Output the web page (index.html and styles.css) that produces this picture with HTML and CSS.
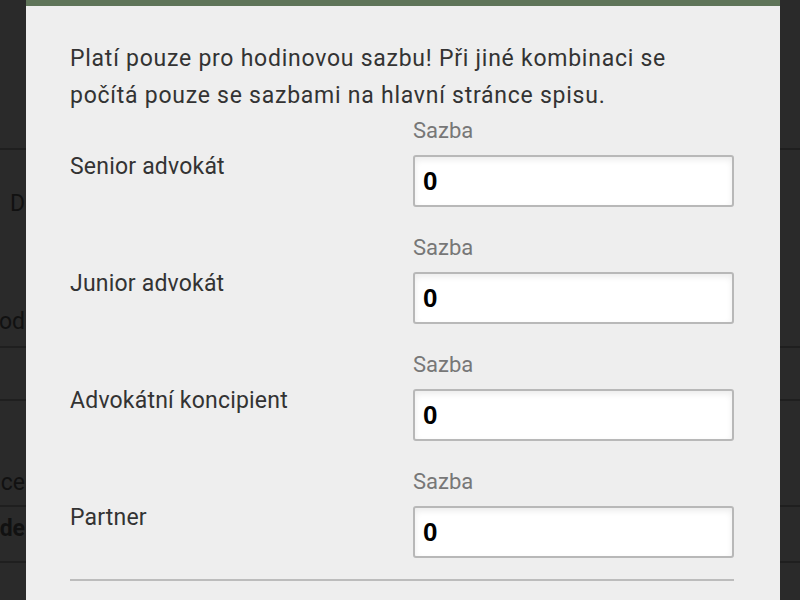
FILE: index.html
```html
<!DOCTYPE html>
<html lang="cs">
<head>
<meta charset="utf-8">
<title>Sazby</title>
<link rel="stylesheet" href="styles.css">
</head>
<body>
<div class="page">
  <header class="page-head"></header>
  <div class="page-row page-row--tall">
    <div class="cell cell--start">Datum</div>
    <div class="cell cell--end">Převod</div>
  </div>
  <div class="page-row page-row--short"></div>
  <div class="page-row page-row--mid">
    <div class="cell cell--end">Pravice</div>
  </div>
  <div class="page-row page-row--mid2">
    <div class="cell cell--end cell--bold">Přede</div>
  </div>
  <div class="page-row page-row--last"></div>
</div>
<div class="modal">
  <div class="modal-body">
    <p class="intro">Platí pouze pro hodinovou sazbu! Při jiné kombinaci se počítá pouze se sazbami na hlavní stránce spisu.</p>
    <div class="rate-row">
      <label class="rate-name">Senior advokát</label>
      <div class="rate-field">
        <div class="field-label">Sazba</div>
        <input class="field-input" type="text" value="0">
      </div>
    </div>
    <div class="rate-row">
      <label class="rate-name">Junior advokát</label>
      <div class="rate-field">
        <div class="field-label">Sazba</div>
        <input class="field-input" type="text" value="0">
      </div>
    </div>
    <div class="rate-row">
      <label class="rate-name">Advokátní koncipient</label>
      <div class="rate-field">
        <div class="field-label">Sazba</div>
        <input class="field-input" type="text" value="0">
      </div>
    </div>
    <div class="rate-row">
      <label class="rate-name">Partner</label>
      <div class="rate-field">
        <div class="field-label">Sazba</div>
        <input class="field-input" type="text" value="0">
      </div>
    </div>
    <hr class="divider">
  </div>
</div>
</body>
</html>
```
FILE: styles.css
```css
html, body {
  margin: 0;
  padding: 0;
  height: 100%;
  overflow: hidden;
}
body {
  background: #2a2a2a;
  font-family: Roboto, "Liberation Sans", sans-serif;
}
.page {
  display: flex;
  flex-direction: column;
}
.page-head {
  height: 148px;
  border-bottom: 2px solid #1f1f1f;
}
.page-row {
  display: flex;
  border-bottom: 2px solid #1f1f1f;
  color: #111;
  font-size: 23px;
}
.page-row--tall { height: 196px; position: relative; }
.page-row--short { height: 51px; }
.page-row--mid { height: 104px; }
.page-row--mid2 { height: 54px; }
.page-row--last { height: 40px; border-bottom: 0; }
.cell {
  white-space: nowrap;
}
.cell--start {
  position: absolute;
  left: 10px;
  top: 40px;
}
.cell--end {
  width: 25px;
  overflow: hidden;
  display: flex;
  justify-content: flex-end;
  padding-top: 158px;
}
.page-row--mid .cell--end { padding-top: 68px; }
.page-row--mid2 .cell--end { padding-top: 8px; }
.cell--bold { font-weight: 700; }

.modal {
  position: fixed;
  left: 26px;
  top: 0;
  width: 754px;
  height: 620px;
  background: #eeeeee;
  border-top: 6px solid #5f7459;
  box-sizing: border-box;
}
.modal-body {
  padding: 34px 46px 0 44px;
  color: #333;
}
.intro {
  margin: 0;
  max-width: 640px;
  font-size: 23px;
  line-height: 37px;
  letter-spacing: 0.75px;
}
.rate-row {
  display: grid;
  grid-template-columns: 343px 321px;
  margin-bottom: 24px;
}
.rate-row:last-of-type {
  margin-bottom: 21px;
}
.rate-name {
  font-size: 23px;
  line-height: 37px;
  padding-top: 34px;
  letter-spacing: 0.2px;
}
.field-label {
  font-size: 22px;
  line-height: 33px;
  margin-bottom: 8px;
  color: #777;
}
.field-input {
  display: block;
  box-sizing: border-box;
  width: 321px;
  height: 52px;
  margin: 0;
  padding: 0 8px;
  border: 2px solid #b8b8b8;
  border-radius: 3px;
  background: #fff;
  box-shadow: inset 0 3px 6px rgba(0, 0, 0, 0.08);
  font-family: "Liberation Sans", sans-serif;
  font-weight: 700;
  font-size: 26px;
  color: #000;
  outline: none;
}
.divider {
  margin: 0;
  border: 0;
  height: 2px;
  background: #bcbcbc;
}
```
